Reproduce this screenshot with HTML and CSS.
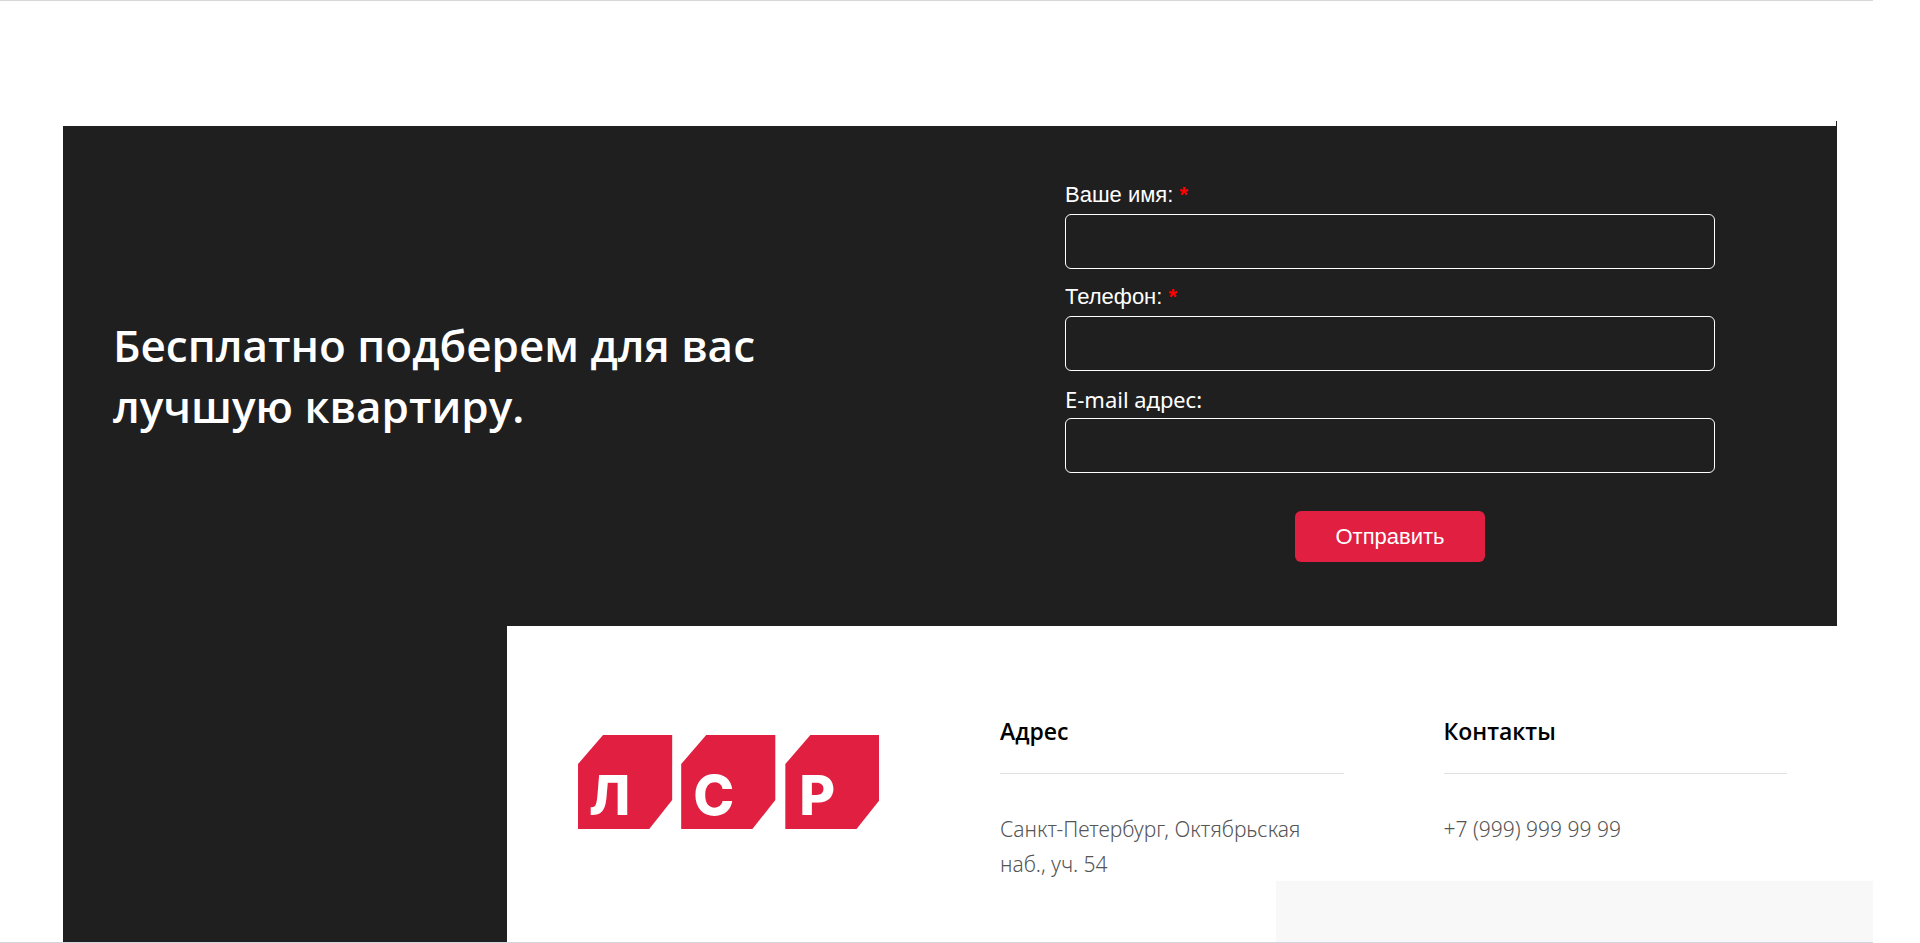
FILE: index.html
```
<!DOCTYPE html>
<html lang="ru">
<head>
    <meta charset="UTF-8">
    <title>ЛСР</title>
    <link rel="stylesheet" href="styles.css">
</head>
<body>
<div class="page">
    <!--заявка-->
    <div class="request">
        <h2 class="request-title">Бесплатно подберем для вас лучшую квартиру.</h2>
        <form class="request-form" action="">
            <label for="name">Ваше имя: <span class="required">*</span></label>
            <input type="text" id="name" name="name" required>
            <label for="phone">Телефон: <span class="required">*</span></label>
            <input type="tel" id="phone" name="phone" required>
            <label class="label-mail" for="email">E-mail адрес:</label>
            <input type="email" id="email" name="email">
            <button type="submit">Отправить</button>
        </form>
    </div>

    <!--подвал-->
    <div class="footer">
        <div class="footer-side"></div>
        <div class="footer-logo">
            <svg class="logo" viewBox="0 0 301 94" role="img" aria-label="ЛСР">
                <g class="logo-tile">
                    <path d="M25 0H94V65L71 94H0V29Z"/>
                    <path d="M128 0H197V65L174 94H103V29Z"/>
                    <path d="M232 0H301V65L278 94H207V29Z"/>
                </g>
                <g class="logo-letter">
                    <text x="11" y="80">Л</text>
                    <text x="115" y="80">С</text>
                    <text x="221" y="80">Р</text>
                </g>
            </svg>
        </div>
        <div class="footer-col">
            <h3>Адрес</h3>
            <p>Санкт-Петербург, Октябрьская наб., уч. 54</p>
        </div>
        <div class="footer-col">
            <h3>Контакты</h3>
            <p>+7 (999) 999 99 99</p>
        </div>
    </div>
    <div class="notice"></div>
</div>
</body>
</html>
```
FILE: styles.css
```
* {
    box-sizing: border-box;
}
body {
    margin: 0;
    background-color: #fff;
    font-family: "Noto Sans", "Open Sans", sans-serif;
}
.page {
    position: relative;
    display: flex;
    flex-direction: column;
    min-height: 100vh;
    margin-right: 47px;
    padding: 125px 36px 0 63px;
    border-top: 1px solid #d8d8d8;
    border-bottom: 1px solid #d3d6dc;
}

/* заявка */
.request {
    position: relative;
    display: grid;
    grid-template-columns: 1fr 1fr;
    align-items: center;
    background-color: #1f1f1f;
    color: #fff;
}
.request::after {
    content: "";
    position: absolute;
    top: -5px;
    right: 0;
    width: 1px;
    height: 5px;
    background-color: #1f1f1f;
}
.request-title {
    margin: 0;
    padding: 0 160px 0 50px;
    font-family: "Open Sans", "Noto Sans", sans-serif;
    font-size: 44px;
    line-height: 61px;
    font-weight: 600;
}
.request-form {
    display: flex;
    flex-direction: column;
    padding: 50px 122px 64px 115px;
    font-family: "Liberation Sans", Arial, sans-serif;
    font-size: 22px;
}
.request-form label {
    line-height: 38px;
}
.request-form .label-mail {
    font-family: "Noto Sans", sans-serif;
}
.required {
    color: #f00;
    font-weight: 700;
}
.request-form input {
    width: 100%;
    height: 55px;
    margin-bottom: 9px;
    padding: 0 16px;
    border: 1px solid #fff;
    border-radius: 6px;
    background-color: transparent;
    color: #fff;
    font: inherit;
}
.request-form button {
    align-self: center;
    margin-top: 29px;
    padding: 1px 40px 0;
    border: 0;
    border-radius: 6px;
    background-color: #e01f41;
    color: #fff;
    font: inherit;
    line-height: 50px;
}

/* подвал */
.footer {
    display: grid;
    grid-template-columns: repeat(4, 1fr);
    flex: 1;
}
.footer-side {
    background-color: #1f1f1f;
}
.footer-logo {
    padding: 109px 71px 0;
}
.logo {
    display: block;
    width: 100%;
}
.logo-tile {
    fill: #e01f41;
}
.logo-letter {
    fill: #fff;
    font-family: Inter, sans-serif;
    font-size: 55px;
    font-weight: 800;
}
.footer-col {
    padding: 85px 50px 50px;
}
.footer-col h3 {
    margin: 0;
    padding-bottom: 22px;
    border-bottom: 1px solid #e1e1e1;
    color: #000;
    font-family: "Open Sans", "Noto Sans", sans-serif;
    font-size: 23px;
    line-height: 40px;
    font-weight: 600;
}
.footer-col p {
    margin: 38px 0 0;
    color: #555;
    font-size: 21px;
    line-height: 35px;
    font-weight: 300;
}
.notice {
    position: absolute;
    right: 0;
    bottom: 0;
    width: 597px;
    height: 61px;
    background-color: #f8f8f8;
}
```
